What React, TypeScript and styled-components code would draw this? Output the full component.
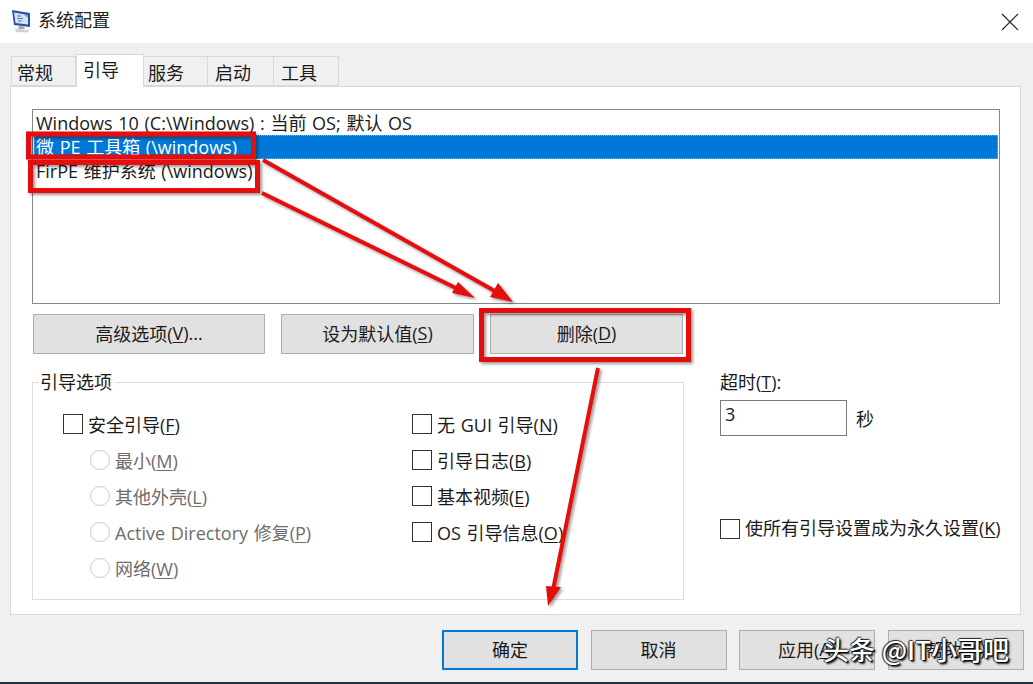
import React from "react";
import styled, { createGlobalStyle } from "styled-components";

const GlobalStyle = createGlobalStyle`
   html, body {
      margin: 0;
      padding: 0;
      background: #f0f0f0;
   }
   * {
      box-sizing: border-box;
   }
`;

const Page = styled.div`
   position: relative;
   width: 1033px;
   height: 684px;
   overflow: hidden;
   display: flex;
   flex-direction: column;
   background: #f0f0f0;
   border-bottom: 2px solid #1d3244;
   color: #1a1a1a;
   font-family: "Open Sans", "Noto Sans CJK SC", sans-serif;
   font-size: 18px;
   word-spacing: 1px;
`;

const TitleBar = styled.div`
   height: 43px;
   flex: none;
   display: flex;
   align-items: center;
   justify-content: space-between;
   padding: 0 14px 0 10px;
   background: #fff;
`;

const TitleLeft = styled.div`
   display: flex;
   align-items: center;
   gap: 6px;
   padding-bottom: 2px;
`;

const TitleText = styled.span`
   font-size: 18px;
   color: #222;
   margin-bottom: 3px;
`;

const Content = styled.div`
   flex: 1;
   display: flex;
   flex-direction: column;
   padding: 12px 12px 0 10px;
`;

const TabStrip = styled.div`
   display: flex;
   height: 31px;
   padding-left: 1px;
   position: relative;
   z-index: 1;
`;

const Tab = styled.div<{ $active?: boolean; $w: number; $pad: number }>`
   width: ${({ $w }) => $w}px;
   height: ${({ $active }) => ($active ? "33px" : "30px")};
   margin-top: ${({ $active }) => ($active ? "-1px" : "1px")};
   display: flex;
   align-items: center;
   padding-left: ${({ $pad }) => $pad}px;
   padding-bottom: ${({ $active }) => ($active ? "4px" : "0")};
   padding-top: ${({ $active }) => ($active ? "0" : "1px")};
   background: ${({ $active }) => ($active ? "#fff" : "#f0f0f0")};
   border: 1px solid #d9d9d9;
   border-left-width: ${({ $active }) => ($active ? "1px" : "0")};
   border-bottom: ${({ $active }) => ($active ? "none" : "1px solid #d9d9d9")};
   &:first-child {
      border-left-width: 1px;
   }
`;

const Panel = styled.div`
   width: 1011px;
   height: 529px;
   flex: none;
   padding: 22px 21px 0;
   background: #fff;
   border: 1px solid #d9d9d9;
`;

const BootList = styled.div`
   width: 968px;
   height: 195px;
   border: 1px solid #828790;
   padding: 1px 1px 0;
`;

const BootItem = styled.div<{ $selected?: boolean }>`
   height: 24px;
   line-height: 24px;
   padding-left: 2px;
   white-space: nowrap;
   background: ${({ $selected }) => ($selected ? "#0078d7" : "transparent")};
   color: ${({ $selected }) => ($selected ? "#fff" : "#1a1a1a")};
   outline: ${({ $selected }) => ($selected ? "1px dotted rgba(255, 255, 255, 0.45)" : "none")};
   outline-offset: -1px;
`;

const ButtonRow = styled.div`
   display: flex;
   gap: 16px;
   margin: 10px 0 0 1px;
`;

const Button = styled.div<{ $w: number; $primary?: boolean }>`
   width: ${({ $w }) => $w}px;
   height: 40px;
   flex: none;
   display: flex;
   align-items: center;
   justify-content: center;
   padding-bottom: 2px;
   background: #e1e1e1;
   border: ${({ $primary }) => ($primary ? "2px solid #0078d7" : "1px solid #adadad")};
   color: #1a1a1a;
`;

const Lower = styled.div`
   display: flex;
   margin-top: 16px;
`;

const Group = styled.fieldset`
   width: 652px;
   height: 230px;
   flex: none;
   margin: 0;
   padding: 12px 0 0 30px;
   border: 1px solid #dcdcdc;
   display: flex;
`;

const GroupTitle = styled.legend`
   margin-left: -25px;
   padding: 0 3px 0 2px;
   height: 24px;
   line-height: 24px;
`;

const Column = styled.div<{ $w?: number }>`
   width: ${({ $w }) => ($w ? `${$w}px` : "auto")};
   display: flex;
   flex-direction: column;
`;

const OptionRow = styled.div<{ $indent?: boolean; $disabled?: boolean }>`
   height: 36px;
   display: flex;
   align-items: center;
   gap: 5px;
   margin-left: ${({ $indent }) => ($indent ? "27px" : "0")};
   white-space: nowrap;
   color: ${({ $disabled }) => ($disabled ? "#6d6d6d" : "#1a1a1a")};
`;

const CheckBox = styled.span`
   width: 20px;
   height: 20px;
   flex: none;
   background: #fff;
   border: 1px solid #333;
`;

const Radio = styled.span`
   width: 20px;
   height: 20px;
   flex: none;
   background: #fff;
   border: 1px solid #cccccc;
   border-radius: 50%;
`;

const Key = styled.span`
   text-decoration: underline;
   text-underline-offset: 2px;
   text-decoration-thickness: 1px;
`;

const Side = styled.div`
   margin: 0 0 0 36px;
   display: flex;
   flex-direction: column;
`;

const TimeoutLabel = styled.div`
   height: 24px;
   line-height: 24px;
`;

const TimeoutRow = styled.div`
   display: flex;
   align-items: center;
   gap: 9px;
   margin-top: 6px;
`;

const TimeoutInput = styled.div`
   width: 127px;
   height: 36px;
   padding-left: 4px;
   line-height: 26px;
   border: 1px solid #7a7a7a;
`;

const PermanentText = styled.span`
   margin-bottom: 3px;
`;

const PermanentRow = styled.div`
   display: flex;
   align-items: center;
   gap: 5px;
   margin-top: 78px;
   white-space: nowrap;
`;

const Footer = styled.div`
   display: flex;
   gap: 12.5px;
   padding: 15px 0 0 432px;
`;

const Watermark = styled.div`
   position: absolute;
   left: 823px;
   top: 632px;
   color: #fff;
   font-size: 26px;
   font-weight: 500;
   line-height: 34px;
   white-space: nowrap;
   font-family: "Noto Sans CJK SC", sans-serif;
   text-shadow: 1px 1px 1px #000, 2px 2px 2px #222, -1px 0 1px #222, 0 -1px 1px #222;
`;

const Annotations = styled.svg`
   position: absolute;
   left: 0;
   top: 0;
   pointer-events: none;
`;

const AppIcon = () => (
   <svg width="22" height="24" viewBox="0 0 22 24">
      <path d="M2 1 L20 4 L20 18 L4 16 Z" fill="#2f4fa6" />
      <path d="M4 3.5 L18 6 L18 15.5 L5.5 14 Z" fill="#d3e3f3" />
      <path d="M7 7h4M7 9.5h6M8 12h4" stroke="#4a78b8" strokeWidth="1.2" />
      <path d="M14 6 L18 6 L18 9 Z" fill="#7fa6d8" />
      <path d="M9 17 L14 17.5 L15 20 L8 20 Z" fill="#a8a8a8" />
      <path d="M5 20 L19 21 L18 23.5 L6 23 Z" fill="#cfcfcf" />
   </svg>
);

const CloseIcon = () => (
   <svg width="18" height="18" viewBox="0 0 18 18">
      <path d="M1 1 L17 17 M17 1 L1 17" stroke="#222" strokeWidth="1.1" fill="none" />
   </svg>
);

const RED = "#e60b0b";

const arrows = [
   { line: "M263 160 L500 294", head: "M513 302 L490 297 L498 283 Z" },
   { line: "M262 193 L462 291", head: "M475 298 L452 293 L458 282 Z" },
   { line: "M598 368 L553 590", head: "M548 606 L546 586 L561 587 Z" },
];

const boxes = [
   { x: 28.5, y: 134, w: 225, h: 23 },
   { x: 30.5, y: 162.5, w: 227, h: 28 },
   { x: 481.5, y: 310.5, w: 207, h: 49 },
];

const App = () => (
   <Page>
      <GlobalStyle />
      <TitleBar>
         <TitleLeft>
            <AppIcon />
            <TitleText>系统配置</TitleText>
         </TitleLeft>
         <CloseIcon />
      </TitleBar>
      <Content>
         <TabStrip>
            <Tab $w={65} $pad={5}>常规</Tab>
            <Tab $w={68} $active $pad={6}>引导</Tab>
            <Tab $w={64} $pad={4}>服务</Tab>
            <Tab $w={66} $pad={7}>启动</Tab>
            <Tab $w={65} $pad={7}>工具</Tab>
         </TabStrip>
         <Panel>
            <BootList>
               <BootItem>Windows 10 (C:\Windows) : 当前 OS; 默认 OS</BootItem>
               <BootItem $selected>微 PE 工具箱 (\windows)</BootItem>
               <BootItem>FirPE 维护系统 (\windows)</BootItem>
            </BootList>
            <ButtonRow>
               <Button $w={232}>高级选项(<Key>V</Key>)...</Button>
               <Button $w={193}>设为默认值(<Key>S</Key>)</Button>
               <Button $w={193}>删除(<Key>D</Key>)</Button>
            </ButtonRow>
            <Lower>
               <Group>
                  <GroupTitle>引导选项</GroupTitle>
                  <Column $w={349}>
                     <OptionRow><CheckBox /><span>安全引导(<Key>F</Key>)</span></OptionRow>
                     <OptionRow $indent $disabled><Radio /><span>最小(<Key>M</Key>)</span></OptionRow>
                     <OptionRow $indent $disabled><Radio /><span>其他外壳(<Key>L</Key>)</span></OptionRow>
                     <OptionRow $indent $disabled><Radio /><span>Active Directory 修复(<Key>P</Key>)</span></OptionRow>
                     <OptionRow $indent $disabled><Radio /><span>网络(<Key>W</Key>)</span></OptionRow>
                  </Column>
                  <Column>
                     <OptionRow><CheckBox /><span>无 GUI 引导(<Key>N</Key>)</span></OptionRow>
                     <OptionRow><CheckBox /><span>引导日志(<Key>B</Key>)</span></OptionRow>
                     <OptionRow><CheckBox /><span>基本视频(<Key>E</Key>)</span></OptionRow>
                     <OptionRow><CheckBox /><span>OS 引导信息(<Key>O</Key>)</span></OptionRow>
                  </Column>
               </Group>
               <Side>
                  <TimeoutLabel>超时(<Key>T</Key>):</TimeoutLabel>
                  <TimeoutRow>
                     <TimeoutInput>3</TimeoutInput>
                     <span>秒</span>
                  </TimeoutRow>
                  <PermanentRow><CheckBox /><PermanentText>使所有引导设置成为永久设置(<Key>K</Key>)</PermanentText></PermanentRow>
               </Side>
            </Lower>
         </Panel>
         <Footer>
            <Button $w={136} $primary>确定</Button>
            <Button $w={136}>取消</Button>
            <Button $w={136}>应用(<Key>A</Key>)</Button>
            <Button $w={136}>帮助(<Key>H</Key>)</Button>
         </Footer>
      </Content>
      <Annotations width="1033" height="684" viewBox="0 0 1033 684">
         <defs>
            <filter id="shadow" x="-20%" y="-20%" width="140%" height="140%">
               <feDropShadow dx="2" dy="2" stdDeviation="1.5" floodColor="#000" floodOpacity="0.4" />
            </filter>
         </defs>
         <g filter="url(#shadow)">
            {arrows.map((a) => (
               <g key={a.line}>
                  <path d={a.line} stroke={RED} strokeWidth="4" fill="none" />
                  <path d={a.head} fill={RED} />
               </g>
            ))}
            {boxes.map((b) => (
               <rect key={b.x} x={b.x} y={b.y} width={b.w} height={b.h} fill="none" stroke={RED} strokeWidth="5" />
            ))}
         </g>
      </Annotations>
      <Watermark>头条 @IT小哥吧</Watermark>
   </Page>
);

export default App;
